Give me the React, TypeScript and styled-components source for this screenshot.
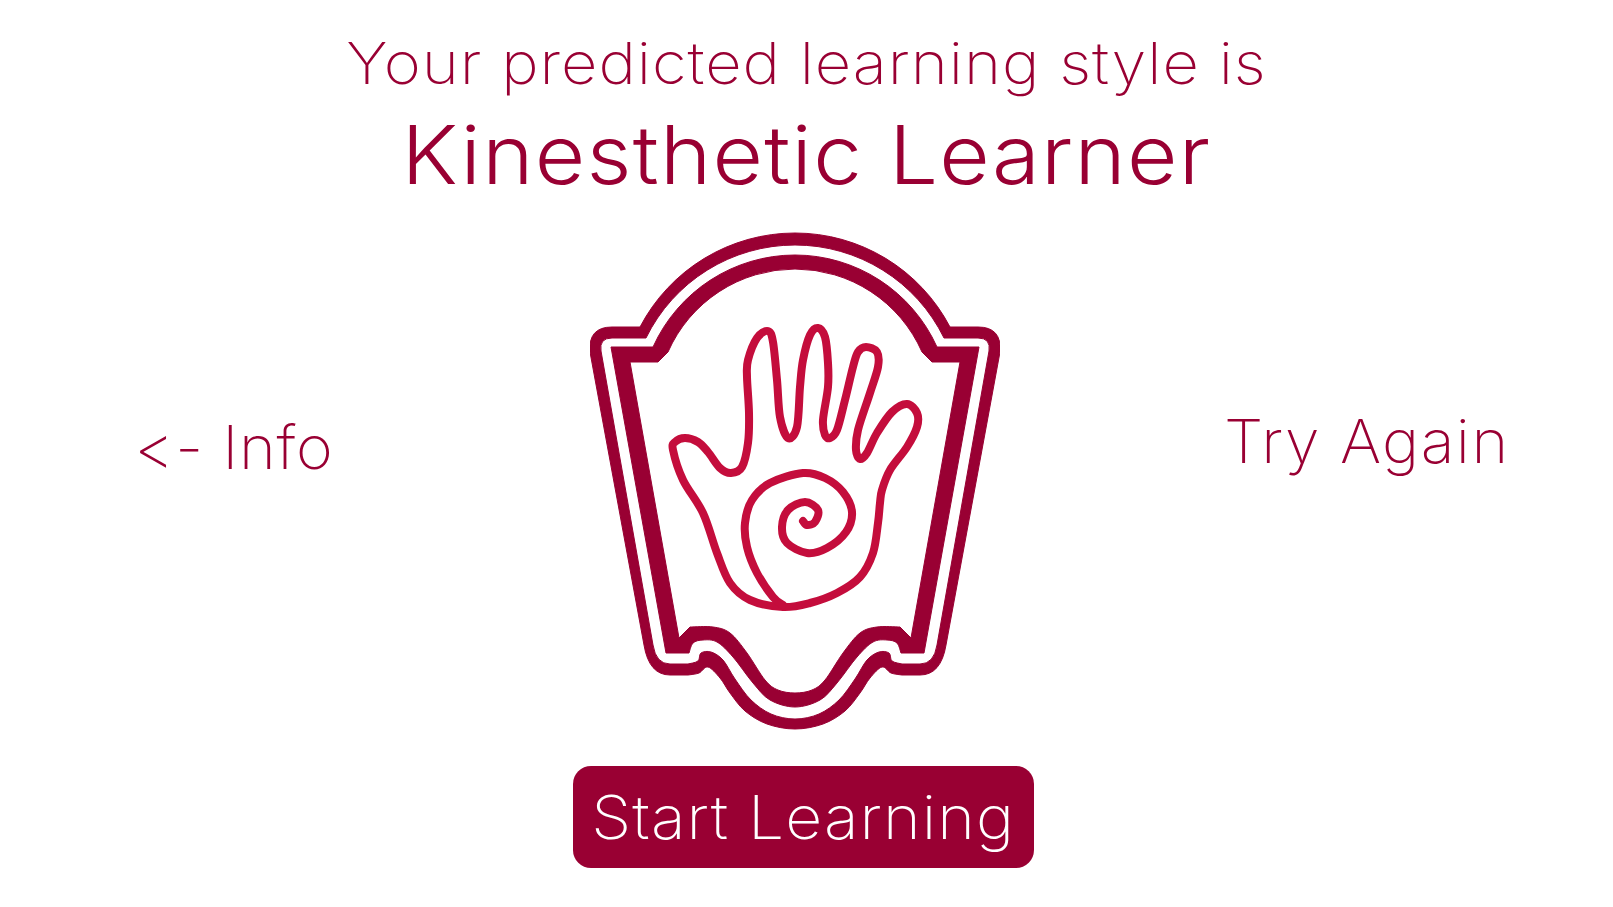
import React from 'react';
import styled, { createGlobalStyle } from 'styled-components';

const GlobalStyle = createGlobalStyle`
  html, body {
    margin: 0;
    padding: 0;
    background: #fff;
  }
`;

const Page = styled.div`
  width: 1613px;
  height: 907px;
  overflow: hidden;
  display: flex;
  flex-direction: column;
  align-items: stretch;
  font-family: Inter, 'Liberation Sans', sans-serif;
  color: #990033;
`;

// the original face is wider than Inter, hence the scaleX
const Subtitle = styled.h2`
  margin: 29px 0 1px;
  height: 68px;
  line-height: 68px;
  font-size: 58px;
  font-weight: 200;
  letter-spacing: 0.9px;
  text-align: center;
  transform: scaleX(1.09);
`;

const Title = styled.h1`
  margin: 0;
  height: 134px;
  line-height: 115px;
  font-size: 81px;
  font-weight: 300;
  letter-spacing: 1.2px;
  text-align: center;
  transform: scaleX(1.075);
`;

const Middle = styled.div`
  display: grid;
  grid-template-columns: 590px 410px 1fr;
  align-items: center;
  height: 500px;
`;

const SideLink = styled.a<{ $inset: number; $lift: number; $track: number }>`
  margin-left: ${({ $inset }) => $inset}px;
  margin-top: ${({ $lift }) => $lift}px;
  font-size: 60px;
  font-weight: 200;
  letter-spacing: ${({ $track }) => $track}px;
  white-space: nowrap;
  transform: scaleX(1.045);
  transform-origin: left center;
`;

const Footer = styled.div`
  display: flex;
  justify-content: center;
  padding: 34px 6px 0 0;
`;

const StartButton = styled.button`
  width: 461px;
  height: 102px;
  border: none;
  border-radius: 18px;
  background: #990033;
  color: #fff;
  font-family: inherit;
  font-size: 60px;
  font-weight: 250;
  letter-spacing: 1px;
  padding: 0;
`;

const ButtonLabel = styled.span`
  display: inline-block;
  transform: scaleX(1.07);
`;

type Pt = [number, number];

// catmull-rom segments through traced points
const curve = (pts: Pt[], closed = false) => {
  const at = (i: number) =>
    closed ? pts[(i + pts.length) % pts.length] : pts[Math.max(0, Math.min(pts.length - 1, i))];
  const n = closed ? pts.length : pts.length - 1;
  let d = '';
  for (let i = 0; i < n; i++) {
    const [p0, p1, p2, p3] = [at(i - 1), at(i), at(i + 1), at(i + 2)];
    const c1x = p1[0] + (p2[0] - p0[0]) / 6;
    const c1y = p1[1] + (p2[1] - p0[1]) / 6;
    const c2x = p2[0] - (p3[0] - p1[0]) / 6;
    const c2y = p2[1] - (p3[1] - p1[1]) / 6;
    d += `C${c1x.toFixed(1)} ${c1y.toFixed(1)} ${c2x.toFixed(1)} ${c2y.toFixed(1)} ${p2[0]} ${p2[1]}`;
  }
  return d;
};

const AXIS = 795;
const mirror = (pts: Pt[]): Pt[] => pts.map(([x, y]) => [2 * AXIS - x, y] as Pt).reverse();

// one closed band edge: arc over the top, sides given by hand, wave mirrored on the axis
const edge = (radius: number, top: number, left: string, right: string, wave: Pt[]) => {
  const start = wave[0];
  return (
    `M${AXIS} ${top}` +
    `A${radius} ${radius} 0 0 0 ${left}` +
    `L${start[0]} ${start[1]}` +
    curve([...wave, ...mirror(wave).slice(1)]) +
    `L${right}A${radius} ${radius} 0 0 0 ${AXIS} ${top}Z`
  );
};

const outerBand =
  edge(175, 233,
    '640 327L612 327Q588 327 590 352L644 645Q649 675 670 675',
    '920 675Q941 675 946 645L1000 352Q1002 327 978 327L950 327',
    [[688, 675], [699, 673], [708, 667], [720, 678], [730, 693], [745, 711], [767, 724], [AXIS, 729]]) +
  edge(166, 245,
    '646 338L612 338Q599 338 601 351L653 645Q656 664 670 664',
    '920 664Q934 664 937 645L989 351Q991 338 978 338L944 338',
    [[688, 664], [698, 661], [701, 653], [711, 652], [723, 660], [735, 679], [751, 700], [771, 714], [AXIS, 719]]);

const innerBand =
  edge(156, 255,
    '653 347L611 347L666 653',
    '924 653L979 347L937 347',
    [[689, 653], [693, 643], [703, 640], [717, 642], [733, 657], [753, 683], [770, 700], [AXIS, 707]]) +
  edge(139, 269,
    '668 352L658 362L630 362L679 638',
    '911 638L960 362L932 362L922 352',
    [[690, 627], [713, 627], [730, 633], [747, 653], [765, 680], [778, 690], [AXIS, 693]]);

const hand: Pt[] = [
  [673, 450], [675, 442], [685, 438], [698, 442], [708, 452], [720, 468], [731, 473], [742, 467],
  [748, 443], [749, 413], [747, 377], [748, 360], [757, 338], [768, 331], [773, 342], [777, 380],
  [780, 417], [788, 438], [797, 427], [800, 387], [803, 360], [810, 335], [818, 328], [825, 337],
  [828, 363], [828, 387], [823, 420], [825, 435], [830, 438], [837, 430], [845, 400], [853, 367],
  [858, 352], [866, 347], [877, 352], [878, 367], [870, 393], [858, 430], [856, 450], [860, 459],
  [867, 453], [877, 433], [892, 412], [907, 404], [917, 413], [917, 427], [907, 447], [890, 470],
  [882, 490], [880, 503], [878, 523], [873, 553], [860, 577], [837, 593], [810, 603], [783, 607],
  [750, 600], [730, 583], [717, 553], [703, 513], [683, 480],
];

const spiral: Pt[] = [
  [783, 605], [773, 597], [757, 573], [747, 547], [745, 523], [752, 500], [770, 483], [803, 473],
  [825, 478], [843, 492], [852, 512], [846, 532], [827, 548], [807, 553], [787, 543], [782, 527],
  [788, 510], [805, 502], [818, 510], [815, 522], [807, 525], [803, 521],
];

const Badge = () => (
  <svg width="410" height="500" viewBox="590 232 410 500">
    <path d={outerBand} fill="#990033" fillRule="evenodd" stroke="#990033" strokeWidth="1" />
    <path d={innerBand} fill="#990033" fillRule="evenodd" stroke="#990033" strokeWidth="1" />
    <path
      d={`M${hand[0][0]} ${hand[0][1]}` + curve(hand, true) + 'Z'}
      fill="none"
      stroke="#c40d3c"
      strokeWidth="8"
      strokeLinejoin="round"
    />
    <path
      d={`M${spiral[0][0]} ${spiral[0][1]}` + curve(spiral)}
      fill="none"
      stroke="#c40d3c"
      strokeWidth="8"
      strokeLinecap="round"
    />
  </svg>
);

export default function App() {
  return (
    <Page>
      <GlobalStyle />
      <Subtitle>Your predicted learning style is</Subtitle>
      <Title>Kinesthetic Learner</Title>
      <Middle>
        <SideLink $inset={134} $lift={-70} $track={0.7}>&lt;- Info</SideLink>
        <Badge />
        <SideLink $inset={224} $lift={-82} $track={1.4}>Try Again</SideLink>
      </Middle>
      <Footer>
        <StartButton>
          <ButtonLabel>Start Learning</ButtonLabel>
        </StartButton>
      </Footer>
    </Page>
  );
}
